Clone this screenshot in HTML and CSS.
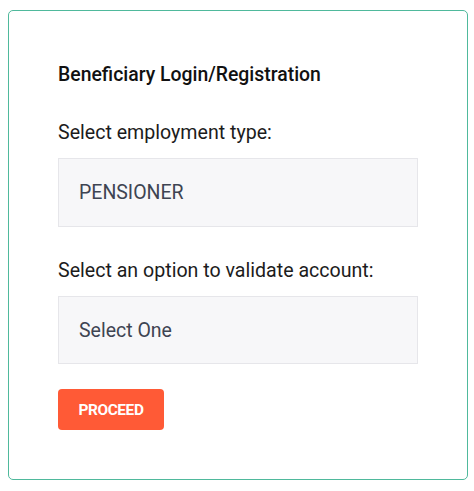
FILE: index.html
```html
<!DOCTYPE html>
<html>
<head>
<meta charset="utf-8">
<link rel="stylesheet" href="styles.css">
</head>
<body>
<div class="card">
  <h2 class="title">Beneficiary Login/Registration</h2>
  <div class="group">
    <label class="label">Select employment type:</label>
    <div class="field">PENSIONER</div>
  </div>
  <div class="group">
    <label class="label">Select an option to validate account:</label>
    <div class="field field-alt">Select One</div>
  </div>
  <button class="btn">PROCEED</button>
</div>
</body>
</html>
```
FILE: styles.css
```css
html, body {
  margin: 0;
  padding: 0;
  background: #ffffff;
}
body {
  font-family: Roboto, "Liberation Sans", sans-serif;
  padding: 10px 6px 0 8px;
}
.card {
  box-sizing: border-box;
  width: 460px;
  height: 470px;
  border: 1.5px solid #4fb99c;
  border-radius: 5px;
  padding: 52px 49px 0 49px;
  display: flex;
  flex-direction: column;
  align-items: flex-start;
}
.title {
  margin: 0 0 34px 0;
  font-size: 19.4px;
  line-height: 24px;
  font-weight: 500;
  color: #111;
}
.group {
  width: 100%;
  margin-bottom: 32px;
}
.group + .group {
  margin-bottom: 25px;
}
.label {
  display: block;
  font-size: 19.6px;
  line-height: 24px;
  color: #1c1c1c;
  margin-bottom: 13px;
}
.field {
  box-sizing: border-box;
  width: 100%;
  height: 69px;
  background: #f7f7f9;
  border: 1px solid #e6e6ea;
  display: flex;
  align-items: center;
  padding-left: 20px;
  font-size: 19.5px;
  color: #3e4452;
}
.field-alt {
  height: 68px;
}
.btn {
  box-sizing: border-box;
  width: 106px;
  height: 41px;
  border: none;
  border-radius: 4px;
  background: #ff5a36;
  color: #fff;
  font-family: Roboto, "Liberation Sans", sans-serif;
  font-weight: 700;
  font-size: 15.4px;
  letter-spacing: -0.4px;
  padding: 0;
}
```
